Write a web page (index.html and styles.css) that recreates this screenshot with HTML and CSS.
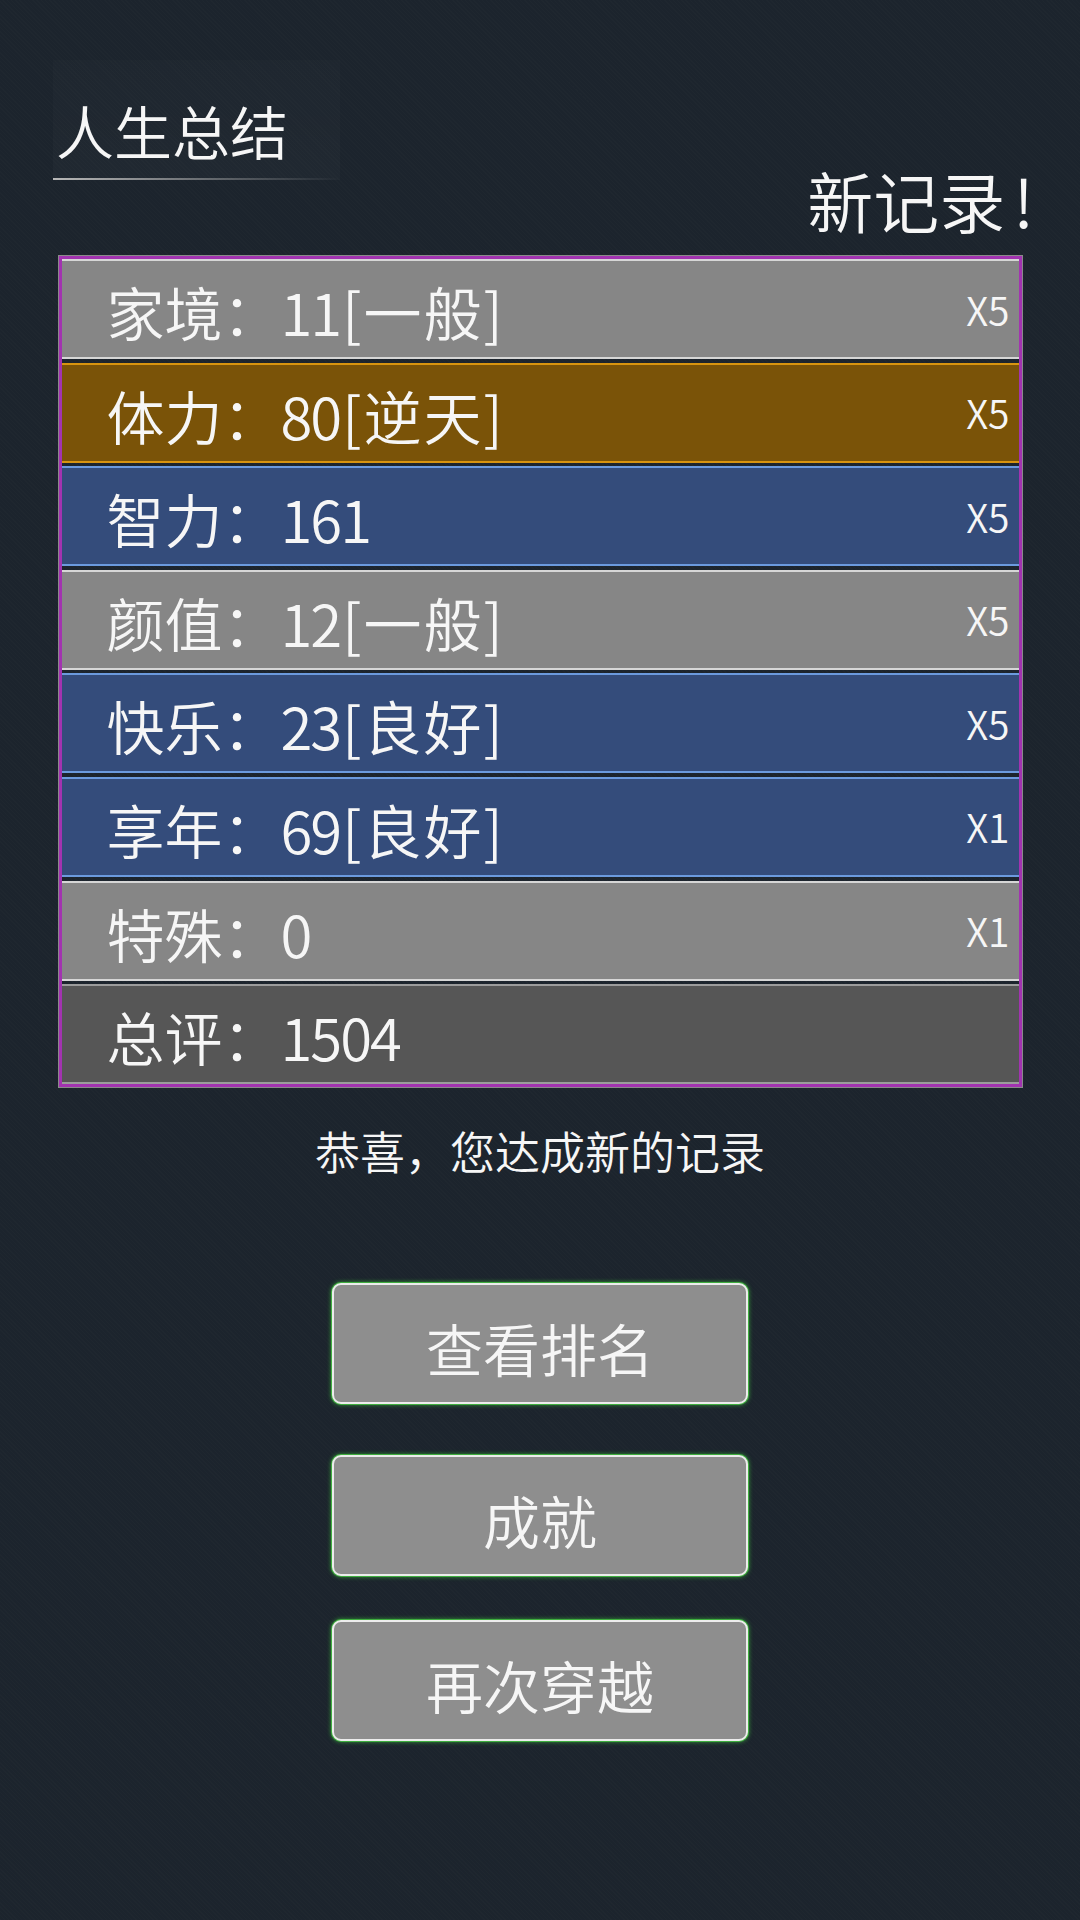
FILE: index.html
```html
<!DOCTYPE html>
<html lang="zh-CN">
<head>
  <meta charset="UTF-8">
  <meta name="viewport" content="width=device-width, initial-scale=1.0">
  <title>人生总结</title>
  <link rel="stylesheet" href="styles.css">
</head>
<body>
<div class="screen">

  <div class="head">
    <div class="title-box">
      <h1 class="title">人生总结</h1>
    </div>
    <div class="record">新记录<span class="bang">!</span></div>
  </div>

  <div class="board">
    <div class="row row-gray"><span class="row-label">家境：<span class="val">11</span><span class="tag">[一般]</span></span><span class="row-mult">X5</span></div>
    <div class="row row-gold"><span class="row-label">体力：<span class="val">80</span><span class="tag">[逆天]</span></span><span class="row-mult">X5</span></div>
    <div class="row row-blue"><span class="row-label">智力：<span class="val">161</span></span><span class="row-mult">X5</span></div>
    <div class="row row-gray"><span class="row-label">颜值：<span class="val">12</span><span class="tag">[一般]</span></span><span class="row-mult">X5</span></div>
    <div class="row row-blue"><span class="row-label">快乐：<span class="val">23</span><span class="tag">[良好]</span></span><span class="row-mult">X5</span></div>
    <div class="row row-blue"><span class="row-label">享年：<span class="val">69</span><span class="tag">[良好]</span></span><span class="row-mult">X1</span></div>
    <div class="row row-gray"><span class="row-label">特殊：<span class="val">0</span></span><span class="row-mult">X1</span></div>
    <div class="row row-total"><span class="row-label">总评：<span class="val">1504</span></span></div>
  </div>

  <p class="congrats">恭喜，您达成新的记录</p>

  <div class="actions">
    <button class="btn btn-first">查看排名</button>
    <button class="btn">成就</button>
    <button class="btn">再次穿越</button>
  </div>

</div>
</body>
</html>
```

FILE: styles.css
```css
body {
  margin: 0;
  background-color: #1c242d;
  background-image: repeating-linear-gradient(45deg, rgba(255, 255, 255, 0.012) 0 1px, transparent 1px 3px);
  font-family: "Noto Sans CJK SC", "Noto Sans", sans-serif;
  font-weight: 350;
  color: #f6f6f6;
}
.screen {
  width: 1080px;
  height: 1920px;
  padding-top: 60px;
  box-sizing: border-box;
}

/* header: title on the left, new record on the right */
.head {
  display: flex;
  justify-content: space-between;
  align-items: flex-start;
  height: 196px;
}
.title-box {
  margin-left: 53px;
  width: 287px;
  padding-top: 41px;
  background: linear-gradient(180deg, rgba(255, 255, 255, 0.01), rgba(255, 255, 255, 0.02));
}
.title {
  margin: 0;
  padding: 0 0 21px 3px;
  font-size: 58px;
  font-weight: inherit;
  line-height: 1;
  background: linear-gradient(90deg, #b8b8b8, rgba(184, 184, 184, 0)) no-repeat left bottom / 100% 2px;
}
.record {
  margin-top: 106px;
  margin-right: 46px;
  font-size: 66px;
  line-height: 1;
}
.bang {
  margin-left: 8px;
}

/* result table */
.board {
  width: 957px;
  margin: 0 auto;
  border: 3px solid #a233b0;
  box-shadow: 0 0 0 1px #8a8a8a;
  display: flex;
  flex-direction: column;
  gap: 3.6px;
}
.row {
  height: 100px;
  box-sizing: border-box;
  border-top: 2px solid;
  border-bottom: 2px solid;
  display: flex;
  align-items: center;
  justify-content: space-between;
  padding: 0 9px 0 45px;
}
.row-label {
  font-size: 58px;
  line-height: 1;
  padding-top: 4px;
}
.val {
  letter-spacing: -2px;
  margin-right: 2px;
}
.tag {
  letter-spacing: 2px;
}
.row-mult {
  font-size: 39px;
  line-height: 1;
}
.row-gray {
  background: #868686;
  border-color: #d6d6d6;
}
.row-gold {
  background: #7a5308;
  border-color: #d8940f;
}
.row-blue {
  background: #344c7b;
  border-color: #6b9ade;
}
.row-total {
  background: #565656;
  border-color: #9c9c9c;
}

.congrats {
  margin: 41px 0 0;
  font-size: 45px;
  line-height: 1;
  text-align: center;
}

/* buttons */
.actions {
  margin-top: 110px;
  display: flex;
  flex-direction: column;
  align-items: center;
  gap: 44px;
}
.btn {
  width: 416px;
  height: 121px;
  box-sizing: border-box;
  padding: 8px 0 0;
  background: #8e8e8e;
  border: 2px solid #ececec;
  border-radius: 9px;
  box-shadow: 0 0 0 1px #3fae3f, 0 0 4px 1px rgba(60, 190, 60, 0.7);
  color: #f6f6f6;
  font-family: inherit;
  font-weight: inherit;
  font-size: 57px;
  line-height: 1;
}
.btn-first {
  margin-bottom: 7px;
}
```
